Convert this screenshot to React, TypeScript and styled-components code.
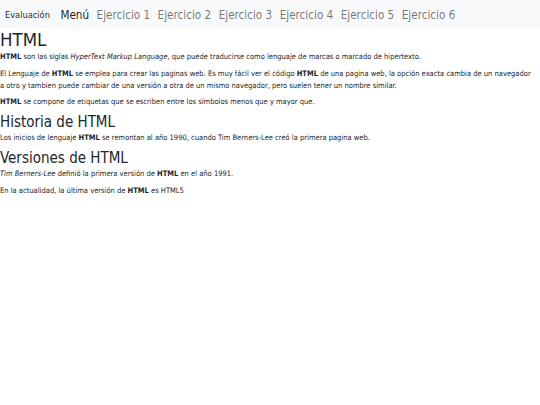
import styled, { createGlobalStyle } from "styled-components";

const GlobalStyle = createGlobalStyle`
  html, body {
    margin: 0;
    padding: 0;
    background: #fff;
  }
  body {
    font-family: "DejaVu Sans Condensed", "DejaVu Sans", sans-serif;
    color: #212529;
  }
`;

const Navbar = styled.nav`
  height: 28px;
  display: flex;
  align-items: center;
  padding: 1px 0 0 5px;
  box-sizing: border-box;
  background: #f8f9fa;
`;

const Brand = styled.a`
  font-size: 9.2px;
  color: rgba(0, 0, 0, 0.9);
  text-decoration: none;
  margin-right: 10.5px;
`;

const NavList = styled.div`
  display: flex;
  align-items: center;
  gap: 7.5px;
`;

const NavItem = styled.a<{ $active?: boolean }>`
  font-size: 11.6px;
  text-decoration: none;
  color: ${(p) => (p.$active ? "rgba(0, 0, 0, 0.9)" : "rgba(0, 0, 0, 0.55)")};
`;

const Main = styled.main`
  padding: 1px 6px 0 0;
`;

const Title = styled.h1`
  margin: 0;
  font-size: 18.5px;
  font-weight: 400;
  line-height: 1.2;
`;

const Subtitle = styled.h2`
  margin: 0 0 1.5px;
  font-size: 15px;
  font-weight: 400;
  line-height: 1.2;
`;

const Para = styled.p`
  margin: 0 0 4.5px;
  font-size: 7.5px;
  line-height: 12px;
`;

const links = ["Ejercicio 1", "Ejercicio 2", "Ejercicio 3", "Ejercicio 4", "Ejercicio 5", "Ejercicio 6"];

export default function App() {
  return (
    <>
      <GlobalStyle />
      <Navbar>
        <Brand href="#">Evaluación</Brand>
        <NavList>
          <NavItem href="#" $active>
            Menú
          </NavItem>
          {links.map((l) => (
            <NavItem href="#" key={l}>
              {l}
            </NavItem>
          ))}
        </NavList>
      </Navbar>
      <Main>
        <Title>HTML</Title>
        <Para>
          <b>HTML</b> son las siglas <i>HyperText Markup Language</i>, que puede traducirse como
          lenguaje de marcas o marcado de hipertexto.
        </Para>
        <Para>
          El Lenguaje de <b>HTML</b> se emplea para crear las paginas web. Es muy fácil ver el código{" "}
          <b>HTML</b> de una pagina web, la opción exacta cambia de un navegador a otro y tambien puede
          cambiar de una versión a otra de un mismo navegador, pero suelen tener un nombre similar.
        </Para>
        <Para>
          <b>HTML</b> se compone de etiquetas que se escriben entre los símbolos menos que y mayor que.
        </Para>
        <Subtitle>Historia de HTML</Subtitle>
        <Para>
          Los inicios de lenguaje <b>HTML</b> se remontan al año 1990, cuando Tim Berners-Lee creó la
          primera pagina web.
        </Para>
        <Subtitle>Versiones de HTML</Subtitle>
        <Para>
          <i>Tim Berners-Lee</i> definió la primera versión de <b>HTML</b> en el año 1991.
        </Para>
        <Para>
          En la actualidad, la última versión de <b>HTML</b> es HTML5
        </Para>
      </Main>
    </>
  );
}
